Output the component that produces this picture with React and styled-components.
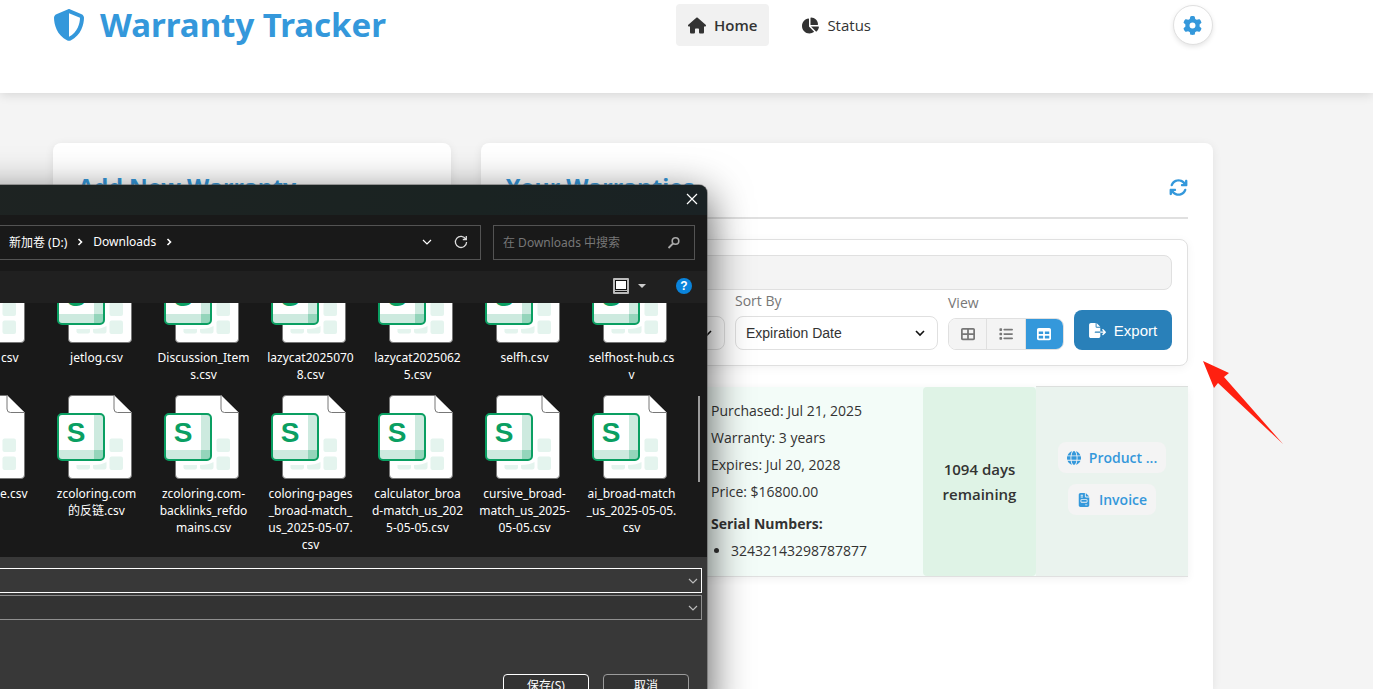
import React from "react";
import styled, { createGlobalStyle, css } from "styled-components";
import {
  FaShieldHalved,
  FaHouse,
  FaChartPie,
  FaGear,
  FaArrowsRotate,
  FaTableCellsLarge,
  FaList,
  FaTable,
  FaFileExport,
  FaGlobe,
  FaFileInvoice,
} from "react-icons/fa6";

const Global = createGlobalStyle`
  *, *::before, *::after { box-sizing: border-box; }
  body {
    margin: 0;
    background: #f4f4f4;
    color: #333;
    font-family: "Open Sans", "Noto Sans", "Noto Sans CJK SC", sans-serif;
    font-size: 14px;
  }
  h1, h2, p, ul { margin: 0; padding: 0; }
  button, input, select { font-family: "Liberation Sans", Arial, sans-serif; }
`;

const Page = styled.div`
  position: relative;
  display: flex;
  flex-direction: column;
  height: 100vh;
  overflow: hidden;
`;

/* ---------- page header ---------- */

const Header = styled.header`
  display: flex;
  align-items: center;
  justify-content: space-between;
  padding: 4px 160px 47px 53px;
  background: #fff;
  box-shadow: 0 2px 10px rgba(0, 0, 0, 0.12);
`;

const Brand = styled.div`
  display: flex;
  align-items: center;
  gap: 15px;
  color: #3498db;
  svg { width: 32px; height: 32px; }
`;

const BrandName = styled.h1`
  font-family: "Noto Sans", sans-serif;
  font-size: 33px;
  font-weight: 700;
  line-height: 42px;
  white-space: nowrap;
`;

const Nav = styled.nav`
  display: flex;
  gap: 20px;
`;

const NavLink = styled.a`
  display: flex;
  align-items: center;
  gap: 8px;
  height: 42px;
  padding: 0 12px;
  border-radius: 4px;
  background: ${(p) => (p.$active ? "#f1f1f1" : "transparent")};
  color: #333;
  font-size: 15px;
  font-weight: ${(p) => (p.$active ? 600 : 400)};
  text-decoration: none;
  svg { width: 18px; height: 17px; }
`;

const GearButton = styled.button`
  display: flex;
  align-items: center;
  justify-content: center;
  width: 40px;
  height: 40px;
  padding: 0;
  border: 1px solid #e0e0e0;
  border-radius: 50%;
  background: #fff;
  color: #3498db;
  box-shadow: 0 2px 5px rgba(0, 0, 0, 0.1);
  svg { width: 19px; height: 19px; }
`;

/* ---------- content panels ---------- */

const Main = styled.main`
  flex: 1;
  display: grid;
  grid-template-columns: minmax(0, 398fr) minmax(0, 732fr);
  gap: 30px;
  padding: 50px 160px 0 53px;
`;

const Panel = styled.section`
  padding: 25px;
  border-radius: 8px 8px 0 0;
  background: #fff;
  box-shadow: 0 2px 10px rgba(0, 0, 0, 0.08);
`;

const PanelHead = styled.div`
  display: flex;
  align-items: center;
  justify-content: space-between;
  height: 51px;
  padding-bottom: 11px;
  border-bottom: 2px solid #e0e0e0;
`;

const PanelTitle = styled.h2`
  color: #3498db;
  font-size: 23px;
  font-weight: 700;
  line-height: 38px;
  white-space: nowrap;
`;

const IconButton = styled.button`
  display: flex;
  padding: 0;
  border: 0;
  background: none;
  color: #3498db;
  svg { width: 19px; height: 19px; }
`;

/* ---------- filters ---------- */

const Filters = styled.div`
  margin-top: 20px;
  padding: 15px;
  border: 1px solid #e0e0e0;
  border-radius: 8px;
  background: #fff;
  box-shadow: 0 2px 10px rgba(0, 0, 0, 0.05);
`;

const SearchBox = styled.input`
  display: block;
  width: 100%;
  height: 35px;
  border: 1px solid #e0e0e0;
  border-radius: 8px;
  background: #f4f4f4;
`;

const FilterRow = styled.div`
  display: flex;
  align-items: flex-end;
  gap: 10px;
`;

const Field = styled.div`
  display: flex;
  flex-direction: column;
  gap: 4px;
  flex: ${(p) => (p.$grow ? "1 1 0" : "0 0 auto")};
  min-width: 0;
`;

const fieldLabel = css`
  color: #777;
  font-size: 14px;
  font-weight: 500;
  line-height: 22px;
`;
const Label = styled.label`${fieldLabel}`;
const GroupLabel = styled.span`${fieldLabel}`;

const SelectWrap = styled.div`
  display: grid;
  align-items: center;
  > * { grid-area: 1 / 1; }
  svg { justify-self: end; margin-right: 13px; pointer-events: none; }
`;

const Select = styled.select`
  appearance: none;
  width: 100%;
  height: 34px;
  padding: 0 10px;
  border: 1px solid #e0e0e0;
  border-radius: 8px;
  background: #fff;
  color: #333;
  font-size: 14px;
`;

const ViewGroup = styled.div`
  display: flex;
  width: 116px;
  height: 32px;
  border: 1px solid #e0e0e0;
  border-radius: 8px;
  overflow: hidden;
`;

const ViewButton = styled.button`
  flex: 1;
  display: flex;
  align-items: center;
  justify-content: center;
  padding: 0;
  border: 0;
  border-right: ${(p) => (p.$active ? "0" : "1px solid #e0e0e0")};
  background: ${(p) => (p.$active ? "#3498db" : "#f4f4f4")};
  color: ${(p) => (p.$active ? "#fff" : "#777")};
  svg { width: 14px; height: 14px; }
`;

const ExportButton = styled.button`
  display: flex;
  align-items: center;
  justify-content: center;
  gap: 8px;
  width: 98px;
  height: 40px;
  padding: 0;
  border: 0;
  border-radius: 8px;
  background: #2980b9;
  color: #fff;
  font-size: 15px;
  svg { width: 17px; height: 15px; }
`;

/* ---------- warranty row ---------- */

const WarrantyRow = styled.article`
  display: grid;
  grid-template-columns: minmax(0, 1fr) 113px 152px;
  margin-top: 21px;
  border-bottom: 1px solid #e0e0e0;
  background: #f3fcf8;
  box-shadow: 0 2px 8px rgba(0, 0, 0, 0.06);
`;

const Details = styled.div`
  padding: 13px 12px 14px 205px;
  line-height: 22px;
  p { margin-bottom: 5px; }
`;

const SerialTitle = styled.p`
  padding-top: 5px;
  font-weight: 700;
`;

const SerialList = styled.ul`
  padding-left: 20px;
`;

const Status = styled.div`
  display: flex;
  align-items: center;
  padding: 0 18px;
  border-radius: 4px;
  background: #dff3e6;
  font-size: 15px;
  font-weight: 600;
  line-height: 25px;
  text-align: center;
`;

const Links = styled.div`
  display: flex;
  flex-direction: column;
  align-items: center;
  justify-content: center;
  gap: 11px;
  margin-top: -1px;
  padding-bottom: 6px;
  border-top: 1px solid #dcdfdd;
  background: #eaf3ee;
`;

const DocLink = styled.a`
  display: flex;
  align-items: center;
  gap: 8px;
  height: 31px;
  padding: 0 9px;
  border-radius: 8px;
  background: #f4f4f4;
  color: #3498db;
  font-size: 14px;
  font-weight: 600;
  text-decoration: none;
  white-space: nowrap;
  svg { height: 14px; width: auto; }
`;

/* ---------- save dialog ---------- */

const Dialog = styled.div`
  position: absolute;
  top: 185px;
  left: -64px;
  width: 771px;
  border-radius: 8px;
  background: #383838;
  color: #fff;
  font-family: "Noto Sans", "Noto Sans CJK SC", sans-serif;
  font-size: 12px;
  box-shadow: 0 0 0 1px rgba(90, 90, 90, 0.5), 0 12px 40px 2px rgba(0, 0, 0, 0.65);
`;

const TitleBar = styled.div`
  display: flex;
  align-items: center;
  justify-content: flex-end;
  height: 30px;
  padding: 0 9px 2px 0;
  border-radius: 8px 8px 0 0;
  background: linear-gradient(90deg, #1e2322, #1a2322 70%, #1a2224);
`;

const PlainButton = styled.button`
  display: flex;
  padding: 0;
  border: 0;
  background: none;
  color: inherit;
`;

const AddressRow = styled.div`
  display: grid;
  grid-template-columns: minmax(0, 1fr) 202px;
  gap: 12px;
  padding: 10px 12px 11px 0;
  background: #191919;
`;

const AddressBox = styled.div`
  display: flex;
  align-items: center;
  height: 35px;
  padding: 0 12px 2px 72px;
  border: 1px solid #535353;
`;

const Crumbs = styled.div`
  flex: 1;
  display: flex;
  align-items: center;
  gap: 10px;
`;

const AddressTools = styled.div`
  display: flex;
  align-items: center;
  gap: 22px;
`;

const DialogSearch = styled.div`
  display: flex;
  align-items: center;
  height: 35px;
  padding: 0 13px 0 9px;
  border: 1px solid #535353;
`;

const DialogSearchInput = styled.input`
  flex: 1;
  min-width: 0;
  padding: 0;
  border: 0;
  outline: 0;
  background: none;
  color: #fff;
  font-family: "Noto Sans", "Noto Sans CJK SC", sans-serif;
  font-size: 12px;
  &::placeholder { color: #777; opacity: 1; }
`;

const Toolbar = styled.div`
  display: flex;
  align-items: center;
  justify-content: flex-end;
  height: 32px;
  padding: 0 15px 2px 0;
  background: #202020;
`;

const ViewMenu = styled.div`
  display: flex;
  align-items: center;
  gap: 8px;
  margin-right: 29px;
`;

const HelpButton = styled.button`
  width: 16px;
  height: 16px;
  padding: 0;
  border: 0;
  border-radius: 50%;
  background: #0a84dc;
  color: #fff;
  font-size: 12px;
  font-weight: 700;
  line-height: 16px;
`;

const FileArea = styled.div`
  display: flex;
  align-items: flex-end;
  justify-content: space-between;
  height: 254px;
  padding: 0 7px 4px 0;
  overflow: hidden;
  background: #191919;
`;

const FileGrid = styled.div`
  display: grid;
  grid-template-columns: repeat(7, 107px);
  grid-template-rows: 136px 158px;
`;

const FileItem = styled.div`
  display: flex;
  flex-direction: column;
  align-items: center;
  gap: 6px;
  > svg { margin-right: 4px; }
`;

const FileName = styled.div`
  width: 100px;
  padding-right: ${(p) => p.$inset || 0}px;
  font-size: 12px;
  line-height: 17px;
  text-align: ${(p) => (p.$inset ? "right" : "center")};
  white-space: pre;
`;

const ScrollThumb = styled.div`
  align-self: flex-start;
  width: 2px;
  height: 86px;
  margin-top: 93px;
  background: #9b9b9b;
`;

const Fields = styled.div`
  display: flex;
  flex-direction: column;
  gap: 2px;
  padding: 11px 5px 0 0;
`;

const Combo = styled.div`
  display: flex;
  align-items: center;
  height: 25px;
  padding-right: 3px;
  border: 1px solid ${(p) => (p.$focus ? "#fff" : "#8f8f8f")};
  background: ${(p) => (p.$focus ? "#383838" : "#333")};
`;

const ComboInput = styled.input`
  flex: 1;
  min-width: 0;
  border: 0;
  outline: 0;
  background: none;
  color: #fff;
`;

const Actions = styled.div`
  display: flex;
  justify-content: flex-end;
  gap: 14px;
  padding: 54px 18px 14px 0;
`;

const ActionButton = styled.button`
  width: 86px;
  height: 24px;
  padding: 0 0 2px;
  border: 1px solid ${(p) => (p.$primary ? "#fff" : "#9b9b9b")};
  border-radius: 4px;
  background: #333;
  color: #fff;
  font-family: "Noto Sans", "Noto Sans CJK SC", sans-serif;
  font-size: 12px;
`;

/* ---------- annotation ---------- */

const ArrowMark = styled.svg`
  position: absolute;
  top: 361px;
  left: 1203px;
  width: 81px;
  height: 84px;
`;

const Chevron = ({ size = 10, color = "currentColor", width = 1.2 }) => (
  <svg width={size} height={size} viewBox="0 0 10 10" fill="none" stroke={color} strokeWidth={width}>
    <path d="M1 3l4 4 4-4" />
  </svg>
);

const CrumbArrow = () => (
  <svg width="6" height="8" viewBox="0 0 6 8" fill="none" stroke="#fff" strokeWidth="1.6">
    <path d="M1.500 1l3 3-3 3" />
  </svg>
);

const SheetIcon = () => (
  <svg width="75" height="84" viewBox="0 0 75 84">
    <path d="M15 .5h42.500L74.500 17.500V80a3.500 3.500 0 0 1-3.500 3.500H15a3.500 3.500 0 0 1-3.500-3.500V4A3.500 3.500 0 0 1 15 .5z" fill="#fff" stroke="#777" />
    <path d="M57 .5V14a3.500 3.500 0 0 0 3.500 3.500h14" fill="#fff" stroke="#777" />
    <g fill="#e4f4ee">
      <rect x="52.500" y="43.500" width="13.500" height="13.500" rx="2" />
      <rect x="52.500" y="61.500" width="13.500" height="13.500" rx="2" />
      <path d="M19.500 70h13.500v2.500a2 2 0 0 1-2 2H21.500a2 2 0 0 1-2-2z" />
      <path d="M36 70c6 0 10-1 13.500-3v5.500a2 2 0 0 1-2 2H38a2 2 0 0 1-2-2z" />
    </g>
    <rect x="1" y="19" width="46" height="46" rx="4" fill="#fff" />
    <path d="M37 19h6a4 4 0 0 1 4 4v32H37z" fill="#cdeadf" />
    <path d="M1 55h36v10H5a4 4 0 0 1-4-4z" fill="#cdeadf" />
    <path d="M37 55h10v6a4 4 0 0 1-4 4h-6z" fill="#94d5bb" />
    <rect x="1" y="19" width="46" height="46" rx="4" fill="none" stroke="#0a9f62" strokeWidth="2" />
    <text x="19" y="47" textAnchor="middle" fontFamily="Liberation Sans, Arial, sans-serif" fontWeight="700" fontSize="28" fill="#0a9f62">S</text>
  </svg>
);

const files = [
  { name: "csv", inset: 21 },
  { name: "jetlog.csv" },
  { name: "Discussion_Item\ns.csv" },
  { name: "lazycat2025070\n8.csv" },
  { name: "lazycat2025062\n5.csv" },
  { name: "selfh.csv" },
  { name: "selfhost-hub.cs\nv" },
  { name: "e.csv", inset: 12 },
  { name: "zcoloring.com\n的反链.csv" },
  { name: "zcoloring.com-\nbacklinks_refdo\nmains.csv" },
  { name: "coloring-pages\n_broad-match_\nus_2025-05-07.\ncsv" },
  { name: "calculator_broa\nd-match_us_202\n5-05-05.csv" },
  { name: "cursive_broad-\nmatch_us_2025-\n05-05.csv" },
  { name: "ai_broad-match\n_us_2025-05-05.\ncsv" },
];

function SaveDialog() {
  return (
    <Dialog role="dialog" aria-label="Save">
      <TitleBar>
        <PlainButton aria-label="Close">
          <svg width="12" height="12" viewBox="0 0 12 12" stroke="#fff" strokeWidth="1.200">
            <path d="M1 1l10 10M11 1L1 11" />
          </svg>
        </PlainButton>
      </TitleBar>
      <AddressRow>
        <AddressBox>
          <Crumbs>
            <span>新加卷 (D:)</span>
            <CrumbArrow />
            <span>Downloads</span>
            <CrumbArrow />
          </Crumbs>
          <AddressTools>
            <PlainButton aria-label="Recent locations"><Chevron /></PlainButton>
            <PlainButton aria-label="Refresh">
              <svg width="14" height="14" viewBox="0 0 14 14" fill="none" stroke="#ddd" strokeWidth="1.300">
                <path d="M11.800 4A5.600 5.600 0 1 0 12.600 7M12.300 1v3.500H8.800" />
              </svg>
            </PlainButton>
          </AddressTools>
        </AddressBox>
        <DialogSearch>
          <DialogSearchInput aria-label="Search" placeholder="在 Downloads 中搜索" />
          <svg width="14" height="14" viewBox="0 0 14 14" fill="none" stroke="#aaa">
            <circle cx="8.500" cy="5" r="3.300" strokeWidth="1.600" />
            <path d="M6 7.500L1.500 12" strokeWidth="1.800" />
          </svg>
        </DialogSearch>
      </AddressRow>
      <Toolbar>
        <ViewMenu>
          <svg width="16" height="16" viewBox="0 0 16 16">
            <rect width="16" height="16" rx="1" fill="#bbb" />
            <rect x="2" y="2" width="12" height="12" fill="#111" />
            <rect x="3" y="3" width="10" height="8" fill="#fff" />
            <rect x="2" y="12" width="12" height="1" fill="#bbb" />
          </svg>
          <svg width="10" height="6" viewBox="0 0 10 6"><path d="M1 1h8L5 5z" fill="#ccc" /></svg>
        </ViewMenu>
        <HelpButton aria-label="Help">?</HelpButton>
      </Toolbar>
      <FileArea>
        <FileGrid>
          {files.map((f) => (
            <FileItem key={f.name}>
              <SheetIcon />
              <FileName $inset={f.inset}>{f.name}</FileName>
            </FileItem>
          ))}
        </FileGrid>
        <ScrollThumb />
      </FileArea>
      <Fields>
        <Combo $focus>
          <ComboInput aria-label="File name" />
          <Chevron color="#bbb" />
        </Combo>
        <Combo>
          <ComboInput aria-label="Save as type" />
          <Chevron color="#bbb" />
        </Combo>
      </Fields>
      <Actions>
        <ActionButton $primary>保存(S)</ActionButton>
        <ActionButton>取消</ActionButton>
      </Actions>
    </Dialog>
  );
}

export default function App() {
  return (
    <>
      <Global />
      <Page>
        <Header>
          <Brand>
            <FaShieldHalved />
            <BrandName>Warranty Tracker</BrandName>
          </Brand>
          <Nav>
            <NavLink href="#home" $active><FaHouse />Home</NavLink>
            <NavLink href="#status"><FaChartPie />Status</NavLink>
          </Nav>
          <GearButton aria-label="Settings"><FaGear /></GearButton>
        </Header>
        <Main>
          <Panel>
            <PanelTitle>Add New Warranty</PanelTitle>
          </Panel>
          <Panel>
            <PanelHead>
              <PanelTitle>Your Warranties</PanelTitle>
              <IconButton aria-label="Refresh warranties"><FaArrowsRotate /></IconButton>
            </PanelHead>
            <Filters>
              <SearchBox aria-label="Search warranties" />
              <FilterRow>
                <Field $grow>
                  <SelectWrap>
                    <Select aria-label="Filter"><option></option></Select>
                    <Chevron color="#111" width={1.6} />
                  </SelectWrap>
                </Field>
                <Field $grow>
                  <Label htmlFor="sort">Sort By</Label>
                  <SelectWrap>
                    <Select id="sort"><option>Expiration Date</option></Select>
                    <Chevron color="#111" width={1.6} />
                  </SelectWrap>
                </Field>
                <Field>
                  <GroupLabel id="view-label">View</GroupLabel>
                  <ViewGroup role="group" aria-labelledby="view-label">
                    <ViewButton aria-label="Grid"><FaTableCellsLarge /></ViewButton>
                    <ViewButton aria-label="List"><FaList /></ViewButton>
                    <ViewButton aria-label="Table" $active><FaTable /></ViewButton>
                  </ViewGroup>
                </Field>
                <ExportButton><FaFileExport />Export</ExportButton>
              </FilterRow>
            </Filters>
            <WarrantyRow>
              <Details>
                <p>Purchased: Jul 21, 2025</p>
                <p>Warranty: 3 years</p>
                <p>Expires: Jul 20, 2028</p>
                <p>Price: $16800.00</p>
                <SerialTitle>Serial Numbers:</SerialTitle>
                <SerialList><li>32432143298787877</li></SerialList>
              </Details>
              <Status>1094 days remaining</Status>
              <Links>
                <DocLink href="#product"><FaGlobe />Product ...</DocLink>
                <DocLink href="#invoice"><FaFileInvoice />Invoice</DocLink>
              </Links>
            </WarrantyRow>
          </Panel>
        </Main>
        <SaveDialog />
        <ArrowMark viewBox="0 0 81 84" aria-hidden="true">
          <path d="M0 0L26 12L21 16L80 83L15 22L11 27Z" fill="#ff2010" />
        </ArrowMark>
      </Page>
    </>
  );
}
